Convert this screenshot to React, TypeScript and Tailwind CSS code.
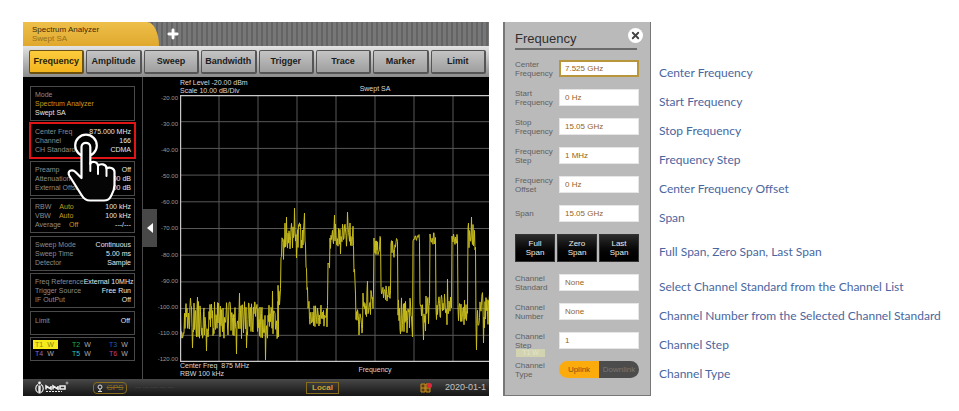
import { Plus, X } from "lucide-react";

const tabs = ["Frequency", "Amplitude", "Sweep", "Bandwidth", "Trigger", "Trace", "Marker", "Limit"];

type Row = { name: string; auto?: string; value: string };

const infoBoxes: Row[][] = [
  [
    { name: "Center Freq", value: "875.000 MHz" },
    { name: "Channel", value: "166" },
    { name: "CH Standard", value: "CDMA" },
  ],
  [
    { name: "Preamp", value: "Off" },
    { name: "Attenuation", value: "0.00 dB" },
    { name: "External Offset", value: "0.00 dB" },
  ],
  [
    { name: "RBW", auto: "Auto", value: "100 kHz" },
    { name: "VBW", auto: "Auto", value: "100 kHz" },
    { name: "Average", auto: "Off", value: "---/---" },
  ],
  [
    { name: "Sweep Mode", value: "Continuous" },
    { name: "Sweep Time", value: "5.00 ms" },
    { name: "Detector", value: "Sample" },
  ],
  [
    { name: "Freq Reference", value: "External 10MHz" },
    { name: "Trigger Source", value: "Free Run" },
    { name: "IF OutPut", value: "Off" },
  ],
];

const traces = [
  { name: "T1", color: "bg-[#f4ea1c] text-[#8d8410]", mode: "text-[#8d8410]" },
  { name: "T2", color: "text-[#1fae4a]", mode: "text-[#aaa]" },
  { name: "T3", color: "text-[#2458b4]", mode: "text-[#aaa]" },
  { name: "T4", color: "text-[#9068c8]", mode: "text-[#aaa]" },
  { name: "T5", color: "text-[#2bc4c4]", mode: "text-[#aaa]" },
  { name: "T6", color: "text-[#cc3a70]", mode: "text-[#aaa]" },
];

const levels = [-20, -30, -40, -50, -60, -70, -80, -90, -100, -110, -120];

// [x from, x to, highest y, lowest y] of each stretch of the sweep
const envelope = [
  [0, 98, 206, 244],
  [98, 100, 190, 215],
  [101, 103, 142, 165],
  [104, 125, 127, 154],
  [126, 127, 170, 195],
  [128, 129, 205, 225],
  [130, 147, 210, 232],
  [148, 149, 160, 175],
  [150, 152, 134, 154],
  [153, 173, 126, 154],
  [174, 175, 170, 205],
  [176, 182, 212, 240],
  [183, 193, 195, 222],
  [194, 200, 141, 160],
  [201, 210, 190, 208],
  [211, 217, 142, 164],
  [218, 232, 202, 240],
  [233, 239, 139, 148],
  [240, 249, 200, 238],
  [250, 255, 136, 150],
  [256, 271, 198, 234],
  [272, 277, 138, 150],
  [278, 287, 200, 230],
  [288, 295, 129, 155],
  [296, 312, 196, 234],
];

// single deep or high readings
const spikes: Record<number, number> = {
  10: 203, 12: 253, 17: 202, 26: 256, 56: 259, 59: 198, 66: 253, 85: 265, 92: 196,
  106: 122, 114: 113, 116: 163, 124: 118, 154: 120, 160: 159, 167: 117,
  187: 186, 220: 239, 232: 242, 243: 245, 267: 184, 288: 128, 291: 122, 296: 255, 303: 248, 310: 192,
};

function tracePoints() {
  let seed = 41;
  const next = () => {
    seed = (seed * 16807) % 2147483647;
    return seed / 2147483647;
  };
  const points: string[] = [];
  for (const [from, to, top, bottom] of envelope) {
    for (let x = from; x <= to; x++) {
      const a = top + next() * (bottom - top);
      const b = top + next() * (bottom - top);
      points.push(`${x},${a.toFixed(1)}`);
      points.push(`${x + 0.5},${(spikes[x] ?? b).toFixed(1)}`);
    }
  }
  return points.join(" ");
}

function InfoBox({ rows, active }: { rows: Row[]; active?: boolean }) {
  return (
    <div
      className={
        active
          ? "-m-px border-2 border-[#e01414] py-[3px] pl-1 pr-[3px]"
          : "border border-[#4a4a4a] py-[3px] pl-1 pr-[3px]"
      }
    >
      {rows.map((row) => (
        <div key={row.name} className="flex whitespace-nowrap leading-[9px]">
          <span className="text-[#8c8c8c]">{row.name}</span>
          {row.auto && <span className="ml-2 text-[#c99a1c]">{row.auto}</span>}
          <span className="flex flex-1 justify-end text-[#e6e6e6]">{row.value}</span>
        </div>
      ))}
    </div>
  );
}

function HandPointer() {
  return (
    <svg viewBox="0 0 50 70" className="absolute left-[44px] top-[56px] h-[70px] w-[50px]" fill="none">
      <circle cx="19" cy="12.5" r="10.8" stroke="#fff" strokeWidth="2.2" />
      <path
        d="M14.5 14 C14.5 8.5 23.3 8.5 23.3 14 V31 C24.5 27.5 31 28.5 31 33 C33 30 39.5 31 39.5 35.5 C42 33.5 47.5 35 47.5 39 V52 C47.5 58 45 61 43.5 64 C42 67 40.5 67.5 37 67.5 H23 C18.5 67.5 16.5 65.5 14.5 62 L2.5 43 C-0.5 38 5 35.5 8.5 39 L14.5 45 Z"
        fill="#050505"
        stroke="#fff"
        strokeWidth="2.2"
        strokeLinejoin="round"
      />
      <path d="M23.3 30 V38 M31 33 V41 M39.5 35.5 V43" stroke="#fff" strokeWidth="2" strokeLinecap="round" />
    </svg>
  );
}

function Sidebar() {
  return (
    <aside className="relative flex w-[120px] shrink-0 flex-col justify-between border-r border-[#4a4a4a] pb-[18px] pl-[7px] pr-[7px] pt-[9px] text-[7px]">
      <div className="border border-[#4a4a4a] px-1 py-[3px] leading-[9px]">
        <p className="text-[#8c8c8c]">Mode</p>
        <p className="text-[#c99a1c]">Spectrum Analyzer</p>
        <p className="text-[#e6e6e6]">Swept SA</p>
      </div>
      {infoBoxes.map((rows, i) => (
        <InfoBox key={rows[0].name} rows={rows} active={i === 0} />
      ))}
      <div className="flex h-6 justify-between border border-[#4a4a4a] px-1 pt-1 leading-[9px]">
        <span className="text-[#8c8c8c]">Limit</span>
        <span className="text-[#e6e6e6]">Off</span>
      </div>
      <div className="grid grid-cols-3 gap-x-3 border border-[#4a4a4a] p-[2px] leading-[9px]">
        {traces.map((trace) => (
          <span key={trace.name} className={`flex gap-1 px-[2px] ${trace.color}`}>
            {trace.name}
            <span className={trace.mode}>W</span>
          </span>
        ))}
      </div>
      <HandPointer />
    </aside>
  );
}

function Chart() {
  return (
    <div className="flex min-w-0 flex-1 overflow-hidden pt-[2px] text-[7px] text-[#d8d8d8]">
      <div className="mb-[17px] mt-4 flex w-[23px] shrink-0 flex-col items-end justify-between pr-[2px] text-[6px] leading-[6px] text-[#9a9a9a]">
        {levels.map((level) => (
          <span key={level}>{level.toFixed(2)}</span>
        ))}
      </div>
      <div className="flex w-[390px] shrink-0 flex-col">
        <div className="grid h-4 grid-cols-[1fr_auto_1fr] items-center leading-[8px]">
          <p className="whitespace-nowrap">
            Ref Level -20.00 dBm
            <br />
            Scale 10.00 dB/Div
          </p>
          <p className="pt-1">Swept SA</p>
        </div>
        <svg viewBox="0 0 390 267" className="block w-full">
          {[1, 2, 3, 4, 5, 6, 7, 8, 9].map((n) => (
            <g key={n} stroke="#585858" strokeWidth="1">
              <path d={`M${n * 39} 0V267`} />
              <path d={`M0 ${n * 26.7}H390`} />
            </g>
          ))}
          <polyline points={tracePoints()} fill="none" stroke="#c9be1e" strokeWidth="1" />
          <path d="M390 .5H.5V266.5H390" fill="none" stroke="#c8c8c8" strokeWidth="1.4" />
        </svg>
        <div className="grid grid-cols-[1fr_auto_1fr] items-center pb-px leading-[8px]">
          <p className="whitespace-nowrap">
            Center Freq&nbsp; 875 MHz
            <br />
            RBW 100 kHz
          </p>
          <p>Frequency</p>
        </div>
      </div>
    </div>
  );
}

function StatusBar() {
  return (
    <footer className="flex h-[17px] items-center whitespace-nowrap bg-linear-to-b from-[#484848] to-[#161616] pl-3 text-[8px]">
      <svg viewBox="0 0 34 13" className="h-[13px] w-[34px]" fill="none" stroke="#eee">
        <circle cx="4.5" cy="2" r="1.4" fill="#eee" stroke="none" />
        <path d="M3 3.5C0 5 0 10 3 11.5M6 3.5C9 5 9 10 6 11.5" strokeWidth="1.2" />
        <path d="M4.5 4.5V12.5" strokeWidth="2.4" />
        <path d="M11 8.5V5l5 3V5M18 8.5V5l5 3V5M25 5h5v3h-5z" strokeWidth="1.6" />
        <path d="M11 10.5h16" strokeWidth="1" strokeDasharray="2 1" />
        <circle cx="32" cy="2" r="1" strokeWidth="0.6" />
      </svg>
      <span className="ml-[24px] flex h-3 w-[34px] items-center justify-center gap-1 rounded-sm border border-[#8a6d1c] text-[#8a6d1c]">
        <svg viewBox="0 0 6 8" className="h-2 w-[6px]" fill="none" stroke="#ddd">
          <circle cx="3" cy="3" r="2" />
          <path d="M3 5v2M1 7.5h4" />
        </svg>
        <s>GPS</s>
      </span>
      <span className="ml-2 text-[6px] text-[#505050]">--- --- ---- --- ---</span>
      <span className="ml-auto flex h-3 w-[33px] items-center justify-center border border-[#8a6d1c] font-bold text-[#d0a030]">
        Local
      </span>
      <svg viewBox="0 0 12 10" className="ml-[81px] h-[10px] w-3">
        <path d="M1 1h4v8H1zM6 1h4v8H6z" fill="#5a3c10" stroke="#c89020" />
        <path d="M1 5h9" stroke="#c89020" />
        <circle cx="9.5" cy="2.5" r="2.5" fill="#e0283c" />
      </svg>
      <time className="ml-[13px] w-[44px] text-[9px] text-[#c4c4c4]">2020-01-1</time>
    </footer>
  );
}

function Analyzer() {
  return (
    <section className="flex min-w-0 flex-col bg-black">
      <div className="flex h-6 items-stretch bg-[repeating-linear-gradient(90deg,#777_0_3px,#636466_3px_5px)]">
        <button className="w-[136px] bg-linear-to-b from-[#eec04a] to-[#e0a82c] pl-[9px] text-left text-[8px] leading-[9px] text-[#3c2c08] [border-top-right-radius:12px_24px]">
          Spectrum Analyzer
          <span className="block text-[#94701c]">Swept SA</span>
        </button>
        <button aria-label="Add tab" className="ml-[7px] text-white">
          <Plus size={14} strokeWidth={5} />
        </button>
      </div>
      <nav className="flex h-[31px] gap-[2px] bg-linear-to-b from-[#e4e4e4] to-[#8c8c8c] pb-[3px] pl-[6px] pr-[3px] pt-1">
        {tabs.map((tab, i) => (
          <button
            key={tab}
            className={
              i === 0
                ? "min-w-0 flex-1 rounded-xs border border-r-2 border-b-2 border-[#6b5212] bg-linear-to-b from-[#fccc3c] to-[#f2b41c] text-[9px] font-bold text-[#2c2208]"
                : "min-w-0 flex-1 rounded-xs border border-r-2 border-b-2 border-[#555] bg-linear-to-b from-[#c4c4c4] to-[#9f9f9f] text-[9px] font-bold text-[#1c1c1c]"
            }
          >
            {tab}
          </button>
        ))}
      </nav>
      <div className="flex items-stretch">
        <Sidebar />
        <button aria-label="Collapse side panel" className="flex h-[38px] w-[14px] items-center justify-center self-center bg-[#484848]">
          <svg viewBox="0 0 6 10" className="h-[10px] w-[6px]">
            <path d="M6 0V10L0 5z" fill="#fff" />
          </svg>
        </button>
        <Chart />
      </div>
      <StatusBar />
    </section>
  );
}

function Field({ id, label, value, active }: { id: string; label: string; value: string; active?: boolean }) {
  return (
    <div className="flex h-[29px] items-center">
      <label htmlFor={id} className="w-11 shrink-0 text-[8px] leading-[9px] text-[#606060]">
        {label}
      </label>
      <input
        id={id}
        defaultValue={value}
        className={
          active
            ? "h-[17px] w-full min-w-0 border-2 border-[#b8963c] bg-white px-1 text-[8px] text-[#94651a]"
            : "h-[17px] w-full min-w-0 border border-[#e6e6e6] bg-white px-[5px] text-[8px] text-[#94651a]"
        }
      />
    </div>
  );
}

function FrequencyPanel() {
  return (
    <section className="relative border-l-2 border-r border-b border-[#777] bg-[#bababa] pl-[10px] pr-[11px] pt-2">
      <h2 className="mr-[2px] border-b-2 border-[#6a6a6a] text-[13px] leading-[18px] text-[#303030]">Frequency</h2>
      <button
        aria-label="Close"
        className="absolute right-[7px] top-[6px] flex size-[15px] items-center justify-center rounded-full bg-white text-[#444]"
      >
        <X size={11} strokeWidth={4} />
      </button>
      {/* trace badge showing through the panel */}
      <span className="absolute left-[11px] top-[327px] h-2 w-[29px] bg-[#d2d3b0] text-center text-[7px] leading-[8px] text-[#e4e4cc]">
        T1 W
      </span>
      <div className="pt-1">
        <Field id="center" label="Center Frequency" value="7.525 GHz" active />
        <Field id="start" label="Start Frequency" value="0 Hz" />
        <Field id="stop" label="Stop Frequency" value="15.05 GHz" />
        <Field id="step" label="Frequency Step" value="1 MHz" />
        <Field id="offset" label="Frequency Offset" value="0 Hz" />
        <Field id="span" label="Span" value="15.05 GHz" />
        <div className="flex h-10 items-center gap-[2px]">
          {["Full", "Zero", "Last"].map((kind) => (
            <button
              key={kind}
              className="h-7 flex-1 border border-[#333] bg-linear-to-b from-[#2c2c2c] to-black text-[8px] leading-[9px] text-[#ececec]"
            >
              {kind}
              <br />
              Span
            </button>
          ))}
        </div>
        <Field id="standard" label="Channel Standard" value="None" />
        <Field id="number" label="Channel Number" value="None" />
        <Field id="chstep" label="Channel Step" value="1" />
        <div className="flex h-[29px] items-center">
          <span id="type" className="w-11 shrink-0 text-[8px] leading-[9px] text-[#606060]">
            Channel Type
          </span>
          <div role="group" aria-labelledby="type" className="flex h-[17px] flex-1 overflow-hidden rounded-full text-[8px]">
            <button aria-pressed="true" className="flex-1 bg-[#fbab0c] text-[#7a5310]">
              Uplink
            </button>
            <button aria-pressed="false" className="flex-1 bg-[#4c4c4c] text-[#777]">
              Downlink
            </button>
          </div>
        </div>
      </div>
    </section>
  );
}

const notes = [
  "Center Frequency",
  "Start Frequency",
  "Stop Frequency",
  "Frequency Step",
  "Center Frequency Offset",
  "Span",
  "Full Span, Zero Span, Last Span",
  "Select Channel Standard from the Channel List",
  "Channel Number from the Selected Channel Standard",
  "Channel Step",
  "Channel Type",
];

export default function App() {
  return (
    <main className="grid grid-cols-[minmax(0,466fr)_148px_minmax(0,294fr)] gap-x-[14px] bg-white pb-[15px] pl-[23px] pt-[22px] font-['Liberation_Sans',Arial,sans-serif]">
      <Analyzer />
      <FrequencyPanel />
      <ul className="-ml-[6px] pt-9 font-['Lato',Carlito,sans-serif] text-[12px] text-[#4a66a0]">
        {notes.map((note) => (
          <li
            key={note}
            className={
              note.startsWith("Full")
                ? "flex h-10 items-center whitespace-nowrap"
                : "flex h-[29px] items-center whitespace-nowrap"
            }
          >
            {note}
          </li>
        ))}
      </ul>
    </main>
  );
}
